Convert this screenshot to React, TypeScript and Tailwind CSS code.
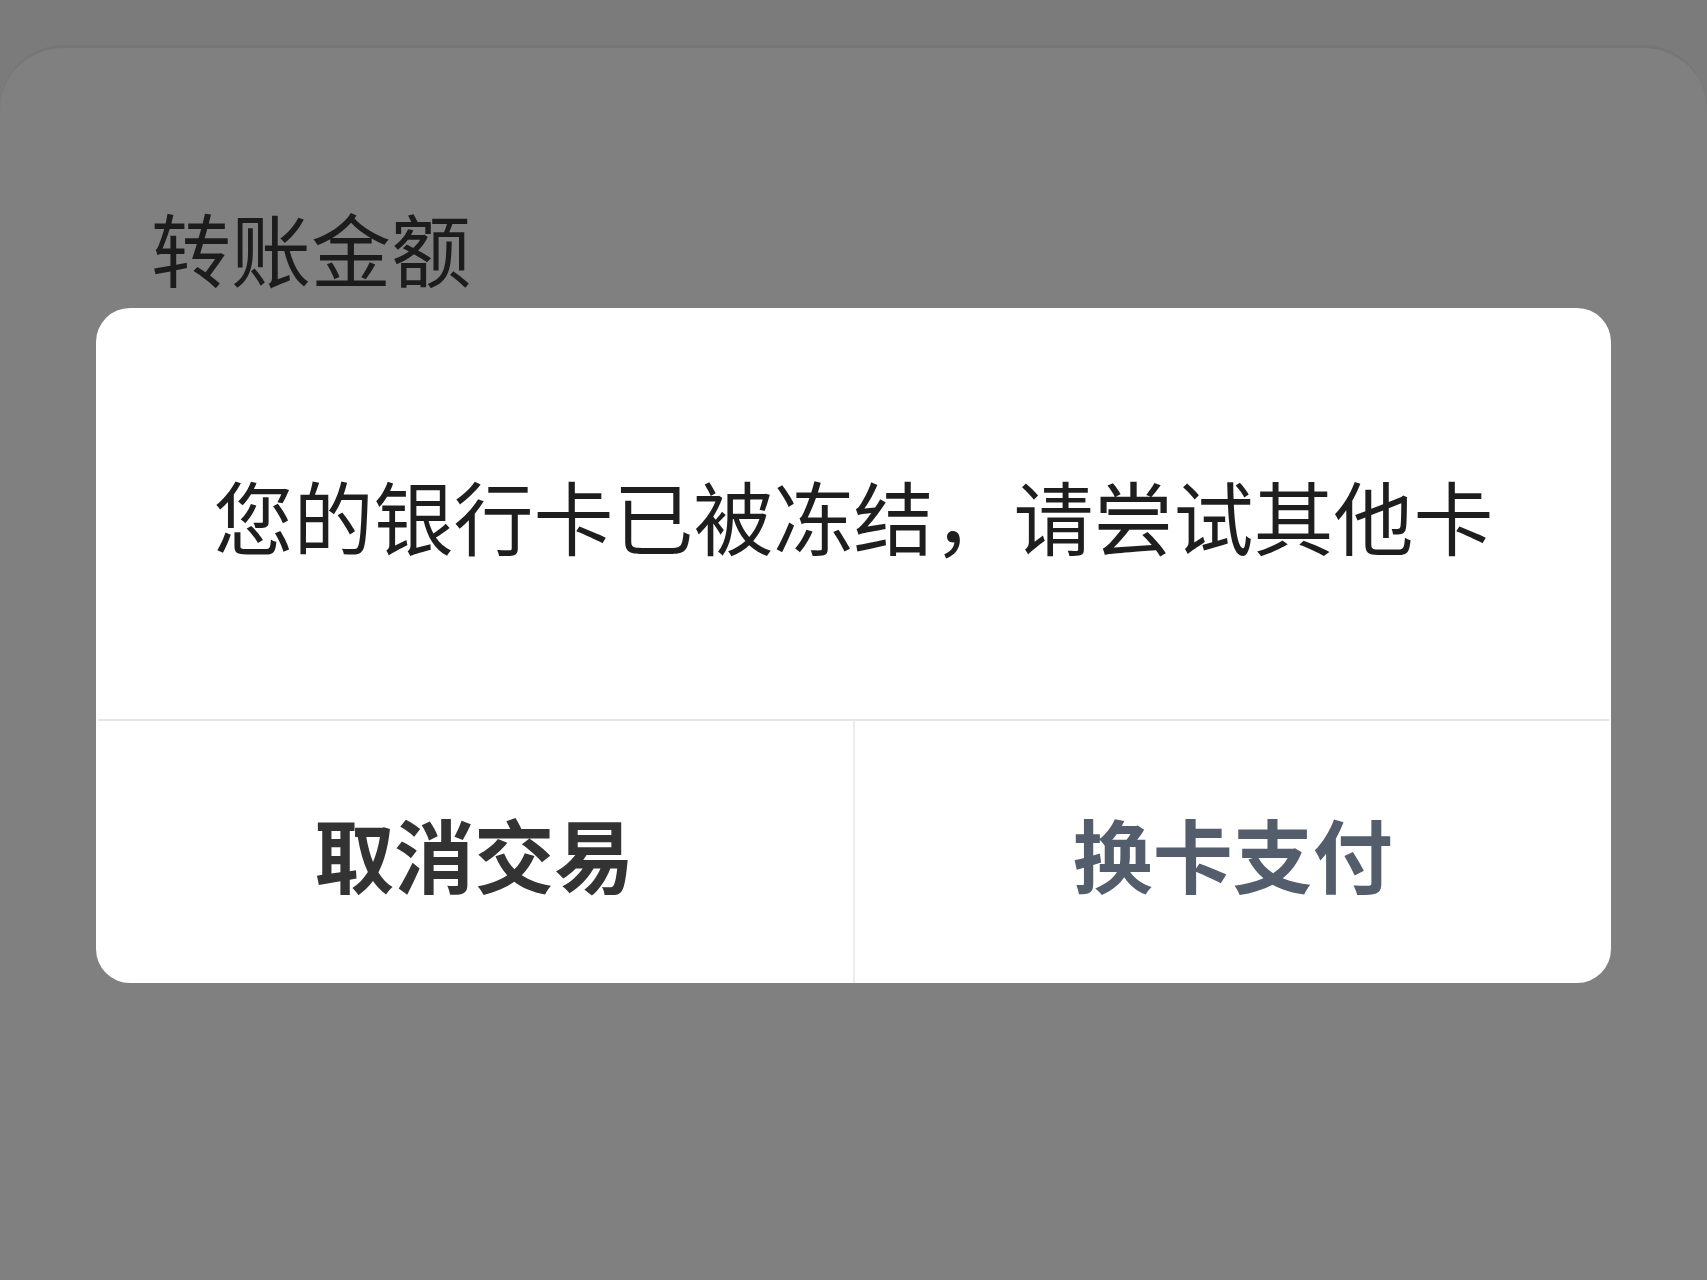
import React from 'react';

const cjk = { fontFamily: '"Noto Sans CJK SC", "Noto Sans", sans-serif' };

export default function App() {
  return (
    <div className="w-[1707px] h-[1280px] bg-[#7b7b7b] overflow-hidden" style={cjk}>
      <div className="mt-[45px] h-[1235px] bg-[#808080] rounded-t-[64px] border-t-[3px] border-[#767676] flex flex-col">
        <div className="pl-[151px] pt-[158px] text-[80px] leading-none text-[#1c1c1c]">转账金额</div>
        <div className="mx-[96px] mt-[22px] h-[675px] bg-white rounded-[34px] flex flex-col overflow-hidden">
          <div className="h-[411px] flex items-center justify-center text-[80px] leading-none text-[#1e1e1e]">
            您的银行卡已被冻结，请尝试其他卡
          </div>
          <div className="h-[2px] bg-[#e6e6e6] mx-[2px]" />
          <div className="flex-1 flex">
            <button className="flex-1 flex items-center justify-center text-[80px] leading-none font-bold text-[#333333]">
              取消交易
            </button>
            <div className="w-[2px] bg-[#ececec]" />
            <button className="flex-1 flex items-center justify-center text-[80px] leading-none font-bold text-[#545d6b]">
              换卡支付
            </button>
          </div>
        </div>
      </div>
    </div>
  );
}
